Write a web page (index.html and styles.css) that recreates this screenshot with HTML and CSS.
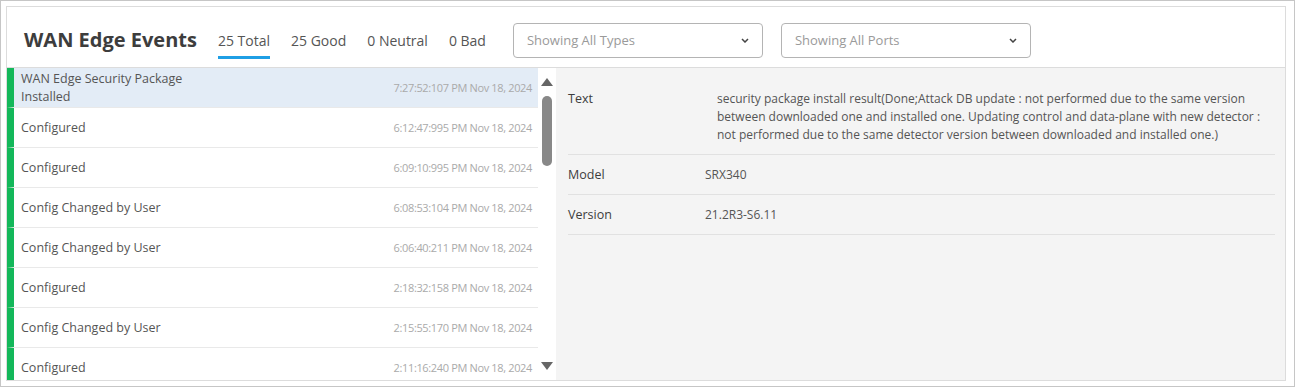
FILE: index.html
```html
<!DOCTYPE html>
<html lang="en">
<head>
    <meta charset="UTF-8">
    <meta name="viewport" content="width=device-width, initial-scale=1.0">
    <title>WAN Edge Events</title>
    <link rel="stylesheet" href="styles.css">
</head>
<body>
    <div class="frame">
        <div class="card">
            <!-- Header -->
            <div class="card-header">
                <h1>WAN Edge Events</h1>
                <div class="tabs">
                    <span class="tab active">25 Total</span>
                    <span class="tab">25 Good</span>
                    <span class="tab">0 Neutral</span>
                    <span class="tab">0 Bad</span>
                </div>
                <div class="select select-types">
                    <span>Showing All Types</span>
                    <svg class="chevron" width="8" height="5" viewBox="0 0 8 5"><path d="M1 1l3 3 3-3" fill="none" stroke="#444" stroke-width="1.5"/></svg>
                </div>
                <div class="select select-ports">
                    <span>Showing All Ports</span>
                    <svg class="chevron" width="8" height="5" viewBox="0 0 8 5"><path d="M1 1l3 3 3-3" fill="none" stroke="#444" stroke-width="1.5"/></svg>
                </div>
            </div>

            <!-- Body -->
            <div class="card-body">
                <div class="event-list">
                    <div class="event selected">
                        <span class="event-name">WAN Edge Security Package Installed</span>
                        <span class="event-time">7:27:52:107 PM Nov 18, 2024</span>
                    </div>
                    <div class="event">
                        <span class="event-name">Configured</span>
                        <span class="event-time">6:12:47:995 PM Nov 18, 2024</span>
                    </div>
                    <div class="event">
                        <span class="event-name">Configured</span>
                        <span class="event-time">6:09:10:995 PM Nov 18, 2024</span>
                    </div>
                    <div class="event">
                        <span class="event-name">Config Changed by User</span>
                        <span class="event-time">6:08:53:104 PM Nov 18, 2024</span>
                    </div>
                    <div class="event">
                        <span class="event-name">Config Changed by User</span>
                        <span class="event-time">6:06:40:211 PM Nov 18, 2024</span>
                    </div>
                    <div class="event">
                        <span class="event-name">Configured</span>
                        <span class="event-time">2:18:32:158 PM Nov 18, 2024</span>
                    </div>
                    <div class="event">
                        <span class="event-name">Config Changed by User</span>
                        <span class="event-time">2:15:55:170 PM Nov 18, 2024</span>
                    </div>
                    <div class="event">
                        <span class="event-name">Configured</span>
                        <span class="event-time">2:11:16:240 PM Nov 18, 2024</span>
                    </div>
                </div>

                <!-- Scrollbar -->
                <div class="scrollbar">
                    <span class="arrow-up"></span>
                    <span class="thumb"></span>
                    <span class="arrow-down"></span>
                </div>

                <!-- Event Details -->
                <div class="details">
                    <div class="detail-row">
                        <div class="detail-label">Text</div>
                        <div class="detail-value text-value">security package install result(Done;Attack DB update : not performed due to the same version between downloaded one and installed one. Updating control and data-plane with new detector : not performed due to the same detector version between downloaded and installed one.)</div>
                    </div>
                    <div class="detail-row">
                        <div class="detail-label">Model</div>
                        <div class="detail-value">SRX340</div>
                    </div>
                    <div class="detail-row">
                        <div class="detail-label">Version</div>
                        <div class="detail-value">21.2R3-S6.11</div>
                    </div>
                </div>
            </div>
        </div>
    </div>
</body>
</html>
```

FILE: styles.css
```css
* {
    margin: 0;
    padding: 0;
    box-sizing: border-box;
}

body {
    font-family: "Open Sans", Arial, sans-serif;
    background-color: #ffffff;
    color: #555;
}

.frame {
    height: 387px;
    border: 1px solid #c6c6c6;
    padding: 5px;
}

.card {
    width: 1280px;
    height: 375px;
    border: 1px solid #dcdcdc;
    display: flex;
    flex-direction: column;
    overflow: hidden;
}

/* Header */
.card-header {
    height: 61px;
    flex-shrink: 0;
    display: flex;
    align-items: center;
    padding: 6px 0 0 17px;
    border-bottom: 1px solid #dcdcdc;
}

.card-header h1 {
    font-size: 20px;
    font-weight: 700;
    color: #3d3d3d;
    margin-right: 21px;
    margin-top: -2px;
}

.tabs {
    display: flex;
    gap: 21px;
    margin-top: 10px;
}

.tab {
    font-size: 14px;
    color: #555;
    padding-bottom: 6px;
    border-bottom: 3px solid transparent;
}

.tab.active {
    border-bottom-color: #1f9fe5;
}

.select {
    height: 35px;
    border: 1px solid #b4b4b4;
    border-radius: 4px;
    display: flex;
    align-items: center;
    justify-content: space-between;
    padding: 0 13px 0 13px;
    font-size: 13px;
    color: #9a9a9a;
}

.select-types {
    width: 250px;
    margin-left: 27px;
}

.select-ports {
    width: 250px;
    margin-left: 18px;
}

/* Body */
.card-body {
    flex: 1;
    display: flex;
    min-height: 0;
}

.event-list {
    width: 531px;
    flex-shrink: 0;
    overflow: hidden;
}

.event {
    height: 40px;
    display: flex;
    align-items: center;
    justify-content: space-between;
    border-left: 7px solid #13b85a;
    border-bottom: 1px solid #e9e9e9;
    padding: 0 6px 0 7px;
    background-color: #fff;
}

.event.selected {
    background-color: #e3ecf6;
}

.event-name {
    width: 180px;
    font-size: 12.5px;
    line-height: 18px;
    color: #555;
}

.event-time {
    font-size: 11px;
    letter-spacing: -0.35px;
    color: #aaa;
}

.scrollbar {
    width: 18px;
    flex-shrink: 0;
    display: flex;
    flex-direction: column;
    align-items: center;
    padding: 10px 0 10px;
    background-color: #fff;
}

.arrow-up,
.arrow-down {
    width: 0;
    height: 0;
    border-left: 6px solid transparent;
    border-right: 6px solid transparent;
}

.arrow-up {
    border-bottom: 8px solid #666;
}

.arrow-down {
    border-top: 8px solid #666;
    margin-top: auto;
}

.thumb {
    width: 10px;
    height: 70px;
    margin-top: 10px;
    border-radius: 5px;
    background-color: #888;
}

/* Details */
.details {
    flex: 1;
    background-color: #f4f4f4;
    padding: 11px 10px 0 12px;
}

.detail-row {
    display: flex;
    padding: 11px 0 10px;
    border-bottom: 1px solid #e1e1e1;
    font-size: 12px;
    line-height: 18px;
}

.detail-label {
    width: 137px;
    flex-shrink: 0;
    color: #3d3d3d;
    font-size: 12.5px;
}

.detail-value {
    color: #555;
}

.text-value {
    padding-left: 12px;
    padding-right: 10px;
}
```
